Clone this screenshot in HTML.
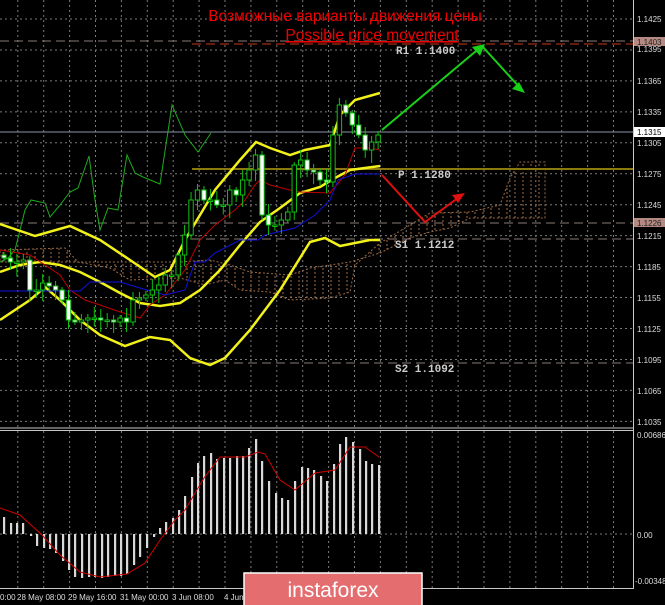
<!DOCTYPE html>
<html><head><meta charset="utf-8"><style>
html,body{margin:0;padding:0;background:#000;width:665px;height:605px;overflow:hidden}
svg{display:block}
.ax{font-family:"Liberation Sans",sans-serif;font-size:8px;fill:#ddd}
.lv{font-family:"Liberation Mono",monospace;font-size:11px;fill:#ccc;font-weight:bold}
</style></head><body>
<svg id="s" width="665" height="605" viewBox="0 0 665 605" xmlns="http://www.w3.org/2000/svg">
<defs>
<pattern id="cl" width="8" height="4" patternUnits="userSpaceOnUse"><line x1="3" y1="0" x2="3" y2="2" stroke="#a86a3a" stroke-width="1"/></pattern>
<clipPath id="mc"><rect x="0" y="0" width="633" height="428"/></clipPath>
</defs>
<rect width="665" height="605" fill="#000"/>
<g id="grid" stroke="#7a7a7a" stroke-width="1" stroke-dasharray="2,3"></g>
<polygon fill="url(#cl)" stroke="#9a6a45" stroke-width="1" stroke-dasharray="2,2" points="0,250 65,248 78,262 110,268 130,280 180,278 205,285 225,280 240,290 270,292 290,300 330,298 350,292 355,265 380,243 410,225 430,213 470,212 500,205 510,178 520,162 545,162 545,218 500,218 470,218 450,228 430,232 410,238 380,253 350,262 310,268 290,275 250,272 230,265 210,260 180,262 0,262"/>
<line x1="0" y1="41" x2="633" y2="41" stroke="#8a7a78" stroke-dasharray="9,5"/>
<line x1="192" y1="44" x2="633" y2="44" stroke="#c83a18" stroke-dasharray="9,5"/>
<line x1="0" y1="132" x2="633" y2="132" stroke="#8a96a8"/>
<line x1="192" y1="169" x2="633" y2="169" stroke="#8a7a10" stroke-width="2"/>
<line x1="0" y1="223" x2="633" y2="223" stroke="#8a7a78" stroke-dasharray="9,5"/>
<line x1="192" y1="239" x2="633" y2="239" stroke="#8a7a78" stroke-dasharray="9,5"/>
<line x1="192" y1="363" x2="633" y2="363" stroke="#8a7a78" stroke-dasharray="9,5"/>
<g clip-path="url(#mc)">
<polyline fill="none" stroke="#1fa81f" stroke-width="1" points="0,262 8,258 15,250 25,210 31,200 45,203 50,217 60,205 70,192 78,188 89,156 95,200 100,230 108,208 118,210 127,155 135,173 143,177 160,184 172,105 185,135 198,152 211,133"/>
<polyline fill="none" stroke="#f2f21a" stroke-width="2.5" points="0,224 35,236 70,226 100,240 130,260 155,277 170,270 185,240 200,215 215,190 240,160 256,142 270,148 290,155 305,150 330,145 340,115 355,100 380,93"/>
<polyline fill="none" stroke="#f2f21a" stroke-width="2.5" points="0,272 20,265 40,262 60,265 80,272 100,282 120,293 140,303 160,306 180,303 200,290 220,270 240,245 260,222 280,208 300,193 320,187 335,178 350,170 380,166"/>
<polyline fill="none" stroke="#f2f21a" stroke-width="2.5" points="0,320 30,300 45,287 60,300 80,320 100,335 125,346 150,337 170,340 190,358 210,365 225,358 250,330 280,290 310,242 325,238 340,246 370,240 380,240"/>
<polyline fill="none" stroke="#c00000" stroke-width="1" points="0,250 30,255 60,275 70,290 85,300 100,305 120,312 140,318 150,305 165,295 185,270 200,240 215,225 235,210 245,200 255,185 260,180 270,185 290,190 300,192 330,193 345,175 355,148 370,148 380,150"/>
<polyline fill="none" stroke="#1010e0" stroke-width="1" points="0,291 80,291 90,282 120,282 140,288 165,295 185,290 195,262 205,262 215,253 240,240 258,240 265,235 295,228 315,215 330,200 338,180 355,174 380,174"/>
<g id="cand"></g>
</g>
<g stroke="#18d018" stroke-width="2" fill="none"><polyline points="382,130 482,46 522,90"/></g>
<polygon fill="#18d018" points="485,44 472,47 480,56"/>
<polygon fill="#18d018" points="525,93 512,89 519,82"/>
<g stroke="#e01010" stroke-width="2" fill="none"><polyline points="382,175 425,222 462,195"/></g>
<polygon fill="#e01010" points="465,193 452,195 458,203"/>
<text class="lv" x="396" y="54">R1 1.1400</text>
<text class="lv" x="398" y="178">P 1.1280</text>
<text class="lv" x="395" y="248">S1 1.1212</text>
<text class="lv" x="395" y="372">S2 1.1092</text>
<text x="345" y="21" text-anchor="middle" font-family="Liberation Sans,sans-serif" font-size="15.5" fill="#f00000">Возможные варианты движения цены</text>
<text x="372" y="40" text-anchor="middle" font-family="Liberation Sans,sans-serif" font-size="15.5" fill="#f00000" text-decoration="underline">Possible price movement</text>
<line x1="0" y1="534" x2="633" y2="534" stroke="#7a7a7a" stroke-dasharray="2,3"/>
<g id="bars" fill="#d8d8d8"></g>
<polyline fill="none" stroke="#d00000" stroke-width="1" points="0,508 20,515 42,535 60,555 80,572 100,577 127,574 145,563 160,540 175,520 185,510 204,478 220,457 245,457 258,452 265,454 280,480 295,490 315,473 335,470 350,447 365,447 379,457"/>
<line x1="633.5" y1="0" x2="633.5" y2="589" stroke="#c8c8c8"/>
<line x1="0" y1="428" x2="634" y2="428" stroke="#c8c8c8"/>
<line x1="0" y1="430.5" x2="634" y2="430.5" stroke="#c8c8c8"/>
<line x1="0" y1="588.5" x2="634" y2="588.5" stroke="#c8c8c8"/>
<g class="ax">
<text x="637" y="22">1.1425</text><text x="637" y="52">1.1395</text><text x="637" y="84">1.1365</text><text x="637" y="115">1.1335</text><text x="637" y="146">1.1305</text><text x="637" y="177">1.1275</text><text x="637" y="208">1.1245</text><text x="637" y="239">1.1215</text><text x="637" y="270">1.1185</text><text x="637" y="301">1.1155</text><text x="637" y="332">1.1125</text><text x="637" y="363">1.1095</text><text x="637" y="394">1.1065</text><text x="637" y="425">1.1035</text>
<text x="637" y="438">0.00686</text><text x="637" y="538">0.00</text><text x="635" y="584">-0.00348</text>
<text x="0" y="600">0:00</text><text x="17" y="600">28 May 08:00</text><text x="68" y="600">29 May 16:00</text><text x="120" y="600">31 May 00:00</text><text x="172" y="600">3 Jun 08:00</text><text x="224" y="600">4 Jun</text>
</g>
<rect x="634" y="37" width="31" height="9" fill="#b48a82"/><text x="637" y="45" font-family="Liberation Sans,sans-serif" font-size="8" fill="#222">1.1403</text>
<rect x="634" y="127" width="31" height="10" fill="#fff"/><text x="637" y="135" font-family="Liberation Sans,sans-serif" font-size="8" fill="#000">1.1315</text>
<rect x="634" y="218" width="31" height="9" fill="#b48a82"/><text x="637" y="226" font-family="Liberation Sans,sans-serif" font-size="8" fill="#222">1.1226</text>
<rect x="244" y="573" width="178" height="34" fill="#e36d6f" stroke="#fff" stroke-width="1.5"/>
<text x="333" y="597" text-anchor="middle" font-family="Liberation Sans,sans-serif" font-size="21" fill="#fff">instaforex</text>
</svg>
<script>
(function(){
var ns="http://www.w3.org/2000/svg";
function el(p,t,a){var e=document.createElementNS(ns,t);for(var k in a)e.setAttribute(k,a[k]);p.appendChild(e);return e;}
var g=document.getElementById("grid");
for(var x=17.8;x<633;x+=25.9){el(g,"line",{x1:x,y1:0,x2:x,y2:428});el(g,"line",{x1:x,y1:431,x2:x,y2:588});}
for(var y=19;y<428;y+=30.95){el(g,"line",{x1:0,y1:y,x2:633,y2:y});}
var c=[258,262,262,260,290,290,283,286,290,300,320,322,320,318,318,320,320,322,318,322,300,298,295,290,285,275,275,255,235,200,190,200,200,205,205,190,195,180,170,155,215,225,225,220,212,165,160,170,172,180,182,135,105,113,125,135,150,142,135];
var cg=document.getElementById("cand");var prev=255;
for(var i=0;i<c.length;i++){var x=4+i*6.45,o=prev,cl=c[i];var top=Math.min(o,cl),bot=Math.max(o,cl);if(bot-top<1.5)bot=top+1.5;
var h=top-3-((i*7)%9),l=bot+3+((i*5)%11);
el(cg,"line",{x1:x,y1:h,x2:x,y2:l,stroke:"#10c010","stroke-width":1});
el(cg,"rect",{x:x-2.2,y:top,width:4.4,height:bot-top,fill:(cl>o?"#ffffff":"#000"),stroke:"#10c010","stroke-width":1});prev=cl;}
var b=[[4,517],[11,523],[17,523],[23,523],[31,536],[37,546],[44,548],[50,549],[56,553],[63,561],[69,570],[75,577],[82,578],[89,577],[95,577],[102,578],[108,577],[115,576],[121,576],[127,574],[134,565],[140,557],[147,548],[154,537],[160,528],[166,522],[173,518],[179,510],[185,496],[192,477],[198,463],[204,456],[211,453],[217,459],[224,458],[230,458],[237,456],[243,456],[249,448],[256,439],[262,461],[269,481],[276,493],[282,498],[288,500],[295,481],[302,467],[308,468],[314,470],[321,476],[327,481],[334,464],[340,444],[346,437],[353,442],[360,449],[366,461],[372,464],[379,465]];
var bg=document.getElementById("bars");
b.forEach(function(v){var z=534;el(bg,"rect",{x:v[0]-1,y:Math.min(z,v[1]),width:2.2,height:Math.max(1,Math.abs(v[1]-z))});});
})();
</script>
</body></html>
